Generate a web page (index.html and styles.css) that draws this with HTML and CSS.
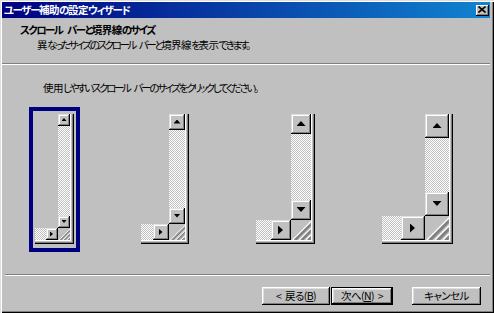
FILE: index.html
```html
<!DOCTYPE html>
<html lang="ja">
<head>
<meta charset="utf-8">
<title>ユーザー補助の設定ウィザード</title>
<link rel="stylesheet" href="styles.css">
</head>
<body>
<div class="window">
  <div class="titlebar">
    <span class="title">ユーザー<span class="k">補助</span>の<span class="k">設定</span>ウィザード</span>
    <span class="close"><svg width="8" height="7" viewBox="0 0 8 7"><path d="M0.5 0.5 L7.5 6.5 M7.5 0.5 L0.5 6.5" stroke="#000" stroke-width="1.6"/></svg></span>
  </div>
  <div class="header">
    <div class="h-title">スクロール バーと<span class="k">境界線</span>のサイズ</div>
    <div class="h-sub"><span class="k">異</span>なったサイズのスクロール バーと<span class="k">境界線</span>を<span class="k">表示</span>できます。</div>
  </div>
  <div class="sep"></div>
  <div class="content">
    <p class="instr"><span class="k">使用</span>しやすいスクロール バーのサイズをクリックしてください。</p>
    <div class="options">
      <div class="option selected sz1">
        <div class="preview">
          <div class="sbtn up"><i class="arr a-up"></i></div>
          <div class="track tv"></div>
          <div class="sbtn down"><i class="arr a-down"></i></div>
          <div class="track th"></div>
          <div class="sbtn right"><i class="arr a-right"></i></div>
          <div class="grip"><svg viewBox="0 0 12 12" preserveAspectRatio="none"><g stroke-width="0.75"><path d="M1 12 L12 1 M5 12 L12 5 M9 12 L12 9" stroke="#fff"/><path d="M2 12 L12 2 M3 12 L12 3 M6 12 L12 6 M7 12 L12 7 M10 12 L12 10 M11 12 L12 11" stroke="#808080"/></g></svg></div>
        </div>
      </div>
      <div class="option sz2">
        <div class="preview">
          <div class="sbtn up"><i class="arr a-up"></i></div>
          <div class="track tv"></div>
          <div class="sbtn down"><i class="arr a-down"></i></div>
          <div class="track th"></div>
          <div class="sbtn right"><i class="arr a-right"></i></div>
          <div class="grip"><svg viewBox="0 0 12 12" preserveAspectRatio="none"><g stroke-width="0.75"><path d="M1 12 L12 1 M5 12 L12 5 M9 12 L12 9" stroke="#fff"/><path d="M2 12 L12 2 M3 12 L12 3 M6 12 L12 6 M7 12 L12 7 M10 12 L12 10 M11 12 L12 11" stroke="#808080"/></g></svg></div>
        </div>
      </div>
      <div class="option sz3">
        <div class="preview">
          <div class="sbtn up"><i class="arr a-up"></i></div>
          <div class="track tv"></div>
          <div class="sbtn down"><i class="arr a-down"></i></div>
          <div class="track th"></div>
          <div class="sbtn right"><i class="arr a-right"></i></div>
          <div class="grip"><svg viewBox="0 0 12 12" preserveAspectRatio="none"><g stroke-width="0.75"><path d="M1 12 L12 1 M5 12 L12 5 M9 12 L12 9" stroke="#fff"/><path d="M2 12 L12 2 M3 12 L12 3 M6 12 L12 6 M7 12 L12 7 M10 12 L12 10 M11 12 L12 11" stroke="#808080"/></g></svg></div>
        </div>
      </div>
      <div class="option sz4">
        <div class="preview">
          <div class="sbtn up"><i class="arr a-up"></i></div>
          <div class="track tv"></div>
          <div class="sbtn down"><i class="arr a-down"></i></div>
          <div class="track th"></div>
          <div class="sbtn right"><i class="arr a-right"></i></div>
          <div class="grip"><svg viewBox="0 0 12 12" preserveAspectRatio="none"><g stroke-width="0.75"><path d="M1 12 L12 1 M5 12 L12 5 M9 12 L12 9" stroke="#fff"/><path d="M2 12 L12 2 M3 12 L12 3 M6 12 L12 6 M7 12 L12 7 M10 12 L12 10 M11 12 L12 11" stroke="#808080"/></g></svg></div>
        </div>
      </div>
    </div>
  </div>
  <div class="sep sep-bottom"></div>
  <div class="buttons">
    <button class="btn btn-back">&lt; 戻る(<u>B</u>)</button>
    <button class="btn btn-next">次へ(<u>N</u>) &gt;</button>
    <button class="btn btn-cancel">キャンセル</button>
  </div>
</div>
</body>
</html>
```
FILE: styles.css
```css
html, body {
  margin: 0;
  padding: 0;
  background: #c0c0c0;
}
body {
  font-family: "Noto Sans CJK JP", "Noto Sans", sans-serif;
  font-size: 10.5px;
  font-feature-settings: "palt";
  letter-spacing: -1px;
  word-spacing: 4px;
  color: #000;
}
.window {
  width: 494px;
  height: 313px;
  box-sizing: border-box;
  padding: 2px 4px 2px 2px;
  background: #c0c0c0;
  box-shadow: inset 1px 1px #dfdfdf, inset 2px 2px #fff, inset -1px -1px #000, inset -2px -2px #808080;
  display: flex;
  flex-direction: column;
}
.titlebar {
  height: 16px;
  flex: none;
  background: linear-gradient(90deg, #000080, #1084d0);
  display: flex;
  align-items: center;
  justify-content: space-between;
  padding: 0 1px 0 2px;
  color: #fff;
  font-weight: bold;
  line-height: 16px;
}
.title { letter-spacing: -1.4px; }
.close {
  width: 13px;
  height: 11px;
  background: #c0c0c0;
  box-shadow: inset -1px -1px #000, inset 1px 1px #fff, inset -2px -2px #808080;
  display: flex;
  align-items: center;
  justify-content: center;
}
.close svg { display: block; margin: 0 1px 1px 0; }
.header {
  padding: 4px 0 11px 18px;
  line-height: 15px;
}
.h-title { font-weight: bold; letter-spacing: -1.6px; }
.h-sub { padding-left: 17px; letter-spacing: -2.4px; }
.k { letter-spacing: -0.5px; }
.sep {
  flex: none;
  border-top: 1px solid #808080;
  border-bottom: 1px solid #fff;
}
.sep-bottom { margin: 22px 0 0 3px; }
.content { padding-top: 15px; }
.instr {
  margin: 0 0 12px 41px;
  line-height: 15px;
  letter-spacing: -2.3px;
}
.options {
  display: flex;
  align-items: flex-start;
  gap: 55px;
  padding-left: 27px;
}
.option {
  border: 4px solid transparent;
  padding: 3px 2px 4px 2px;
}
.option.selected { border-color: #000080; }
.sz1 { --s: 12px; --t: 11px; --v: 90px; --aw: 5px; --ah: 3px; }
.sz2 { --s: 16px; --t: 12px; --v: 78px; --aw: 7px; --ah: 4px; }
.sz3 { --s: 20px; --t: 15px; --v: 66px; --aw: 9px; --ah: 5px; }
.sz4 { --s: 24px; --t: 19px; --v: 54px; --aw: 9px; --ah: 5px; }
.preview {
  display: grid;
  grid-template-columns: var(--t) var(--s) var(--s);
  grid-template-rows: var(--s) var(--v) var(--s) var(--s);
  padding: 0 4px 4px 0;
  box-shadow: inset -1px -1px #000, inset -2px -2px #808080, inset -3px -3px #c0c0c0, inset -4px -4px #fff;
}
.sbtn {
  background: #c0c0c0;
  box-shadow: inset -1px -1px #000, inset 1px 1px #dfdfdf, inset -2px -2px #808080, inset 2px 2px #fff;
  display: flex;
  align-items: center;
  justify-content: center;
}
.track {
  background: repeating-conic-gradient(#c0c0c0 0 25%, #fff 0 50%) 0 0 / 2px 2px;
}
.up { grid-column: 3; grid-row: 1; }
.tv { grid-column: 3; grid-row: 2; }
.down { grid-column: 3; grid-row: 3; }
.th { grid-column: 1; grid-row: 4; }
.right { grid-column: 2; grid-row: 4; }
.grip { grid-column: 3; grid-row: 4; background: #c0c0c0; }
.grip svg { display: block; width: 100%; height: 100%; }
.arr { display: block; background: #000; }
.a-up { width: var(--aw); height: var(--ah); clip-path: polygon(50% 0, 100% 100%, 0 100%); margin-bottom: 1px; }
.a-down { width: var(--aw); height: var(--ah); clip-path: polygon(0 0, 100% 0, 50% 100%); margin-bottom: 1px; }
.a-right { width: var(--ah); height: var(--aw); clip-path: polygon(0 0, 100% 50%, 0 100%); margin-right: 1px; }
.buttons {
  display: flex;
  justify-content: flex-end;
  padding: 11px 9px 0 0;
}
.btn {
  font: inherit;
  letter-spacing: -0.6px;
  word-spacing: 2px;
  color: #000;
  height: 18px;
  padding: 0;
  margin: 0;
  border: none;
  background: #c0c0c0;
  box-shadow: inset -1px -1px #000, inset 1px 1px #fff, inset -2px -2px #808080, inset 2px 2px #dfdfdf;
  line-height: 16px;
  text-align: center;
}
.btn-back { width: 68px; }
.btn-next {
  width: 62px;
  margin-left: 1px;
  border: 1px solid #000;
}
.btn-cancel { width: 69px; margin-left: 19px; }
u { text-decoration: underline; }
```
